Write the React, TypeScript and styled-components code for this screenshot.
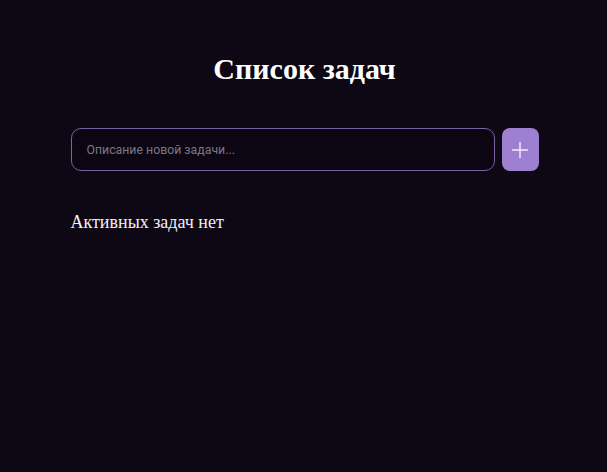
import React, { useState } from "react";
import styled, { createGlobalStyle } from "styled-components";

const Global = createGlobalStyle`
  html, body { margin: 0; padding: 0; background: #0d0814; }
  body { font-family: "Liberation Serif", serif; color: #ffffff; }
`;

const Page = styled.div`
  min-height: 472px;
  background: #0d0814;
  display: flex;
  flex-direction: column;
  align-items: center;
  padding-top: 51px;
  box-sizing: border-box;
`;

const Container = styled.div`
  width: 468px;
  margin-left: 2px;
  display: flex;
  flex-direction: column;
`;

const Title = styled.h1`
  margin: 0;
  text-align: center;
  font-family: "Liberation Serif", serif;
  font-weight: 700;
  font-size: 30px;
  line-height: 36px;
  color: #ffffff;
`;

const Form = styled.form`
  display: flex;
  gap: 7px;
  margin-top: 41px;
`;

const Input = styled.input`
  flex: 1;
  height: 43px;
  box-sizing: border-box;
  background: #0b0612;
  border: 1px solid #7a62a3;
  border-radius: 10px;
  padding: 0 15px;
  font-family: Roboto, "Noto Sans", sans-serif;
  font-size: 12.3px;
  color: #e6e0ef;
  outline: none;
  &::placeholder { color: #7d7784; }
`;

const AddButton = styled.button`
  width: 37px;
  height: 43px;
  border: none;
  border-radius: 8px;
  background: #9f7fd1;
  display: flex;
  align-items: center;
  justify-content: center;
  padding: 0;
  cursor: pointer;
`;

const Empty = styled.p`
  margin: 41px 0 0;
  font-family: "Liberation Serif", serif;
  font-size: 18px;
  color: #f2eef6;
`;

export default function App() {
  const [value, setValue] = useState("");
  return (
    <>
      <Global />
      <Page>
        <Container>
          <Title>Список задач</Title>
          <Form onSubmit={(e) => e.preventDefault()}>
            <Input
              placeholder="Описание новой задачи..."
              value={value}
              onChange={(e) => setValue(e.target.value)}
            />
            <AddButton type="submit" aria-label="add">
              <svg width="18" height="18" viewBox="0 0 18 18">
                <path d="M9 1.5V16.5M1.5 9H16.5" stroke="#f4eefc" strokeWidth="1.4" strokeLinecap="round" />
              </svg>
            </AddButton>
          </Form>
          <Empty>Активных задач нет</Empty>
        </Container>
      </Page>
    </>
  );
}
